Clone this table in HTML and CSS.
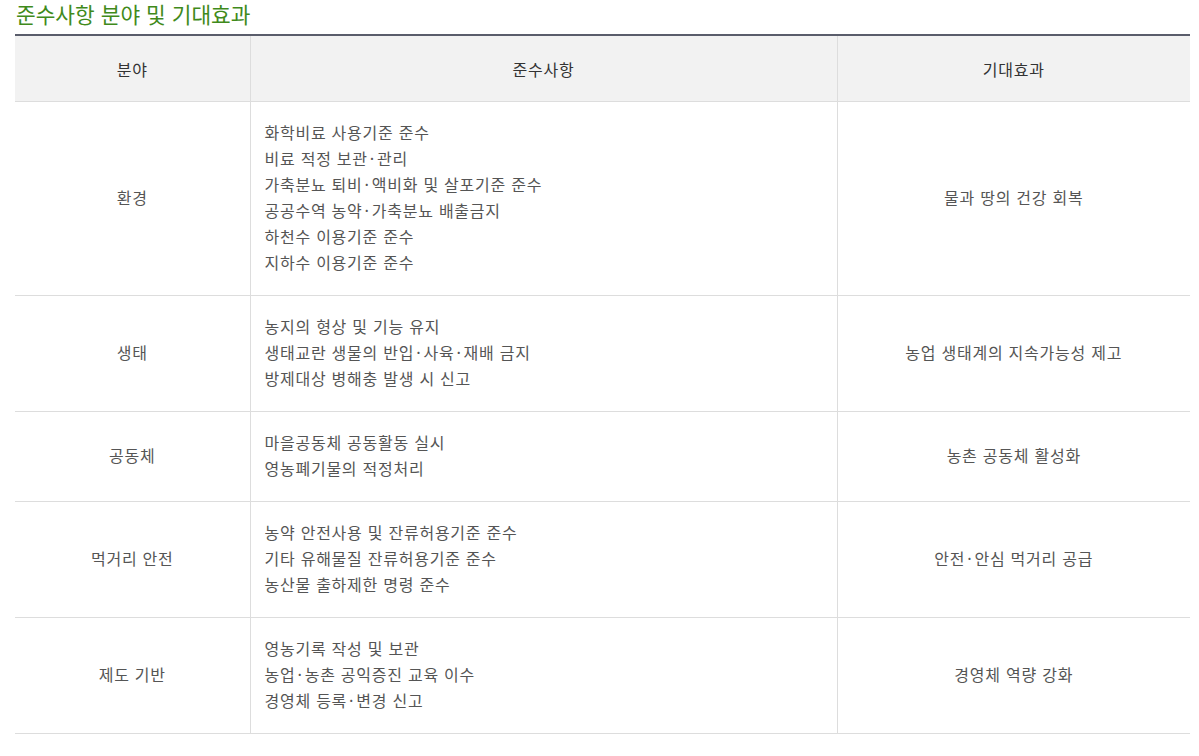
FILE: index.html
```html
<!DOCTYPE html>
<html lang="ko">
<head>
<meta charset="utf-8">
<link rel="stylesheet" href="styles.css">
</head>
<body>
<h2 class="title">준수사항 분야 및 기대효과</h2>
<table class="tbl">
  <colgroup>
    <col class="c1"><col class="c2"><col class="c3">
  </colgroup>
  <thead>
    <tr><th>분야</th><th>준수사항</th><th>기대효과</th></tr>
  </thead>
  <tbody>
    <tr>
      <td class="cat">환경</td>
      <td class="list">화학비료 사용기준 준수<br>비료 적정 보관<span class="dot">·</span>관리<br>가축분뇨 퇴비<span class="dot">·</span>액비화 및 살포기준 준수<br>공공수역 농약<span class="dot">·</span>가축분뇨 배출금지<br>하천수 이용기준 준수<br>지하수 이용기준 준수</td>
      <td class="eff">물과 땅의 건강 회복</td>
    </tr>
    <tr>
      <td class="cat">생태</td>
      <td class="list">농지의 형상 및 기능 유지<br>생태교란 생물의 반입<span class="dot">·</span>사육<span class="dot">·</span>재배 금지<br>방제대상 병해충 발생 시 신고</td>
      <td class="eff">농업 생태계의 지속가능성 제고</td>
    </tr>
    <tr>
      <td class="cat">공동체</td>
      <td class="list">마을공동체 공동활동 실시<br>영농폐기물의 적정처리</td>
      <td class="eff">농촌 공동체 활성화</td>
    </tr>
    <tr>
      <td class="cat">먹거리 안전</td>
      <td class="list">농약 안전사용 및 잔류허용기준 준수<br>기타 유해물질 잔류허용기준 준수<br>농산물 출하제한 명령 준수</td>
      <td class="eff">안전<span class="dot">·</span>안심 먹거리 공급</td>
    </tr>
    <tr>
      <td class="cat">제도 기반</td>
      <td class="list">영농기록 작성 및 보관<br>농업<span class="dot">·</span>농촌 공익증진 교육 이수<br>경영체 등록<span class="dot">·</span>변경 신고</td>
      <td class="eff">경영체 역량 강화</td>
    </tr>
  </tbody>
</table>
</body>
</html>
```
FILE: styles.css
```css
html, body {
  margin: 0;
  padding: 0;
  background: #fff;
}
body {
  font-family: "Noto Sans CJK KR", "Noto Sans", sans-serif;
  color: #555;
  padding: 0 9px 0 15px;
}
.title {
  margin: 0;
  height: 34px;
  padding-left: 1px;
  font-size: 21.4px;
  font-weight: 400;
  line-height: 28px;
  color: #3f8a1b;
}
.tbl {
  width: 1175px;
  border-collapse: collapse;
  border-top: 2px solid #5a5d6b;
  table-layout: fixed;
  font-size: 16px;
  letter-spacing: 0.75px;
}
.c1 { width: 235px; }
.c2 { width: 587px; }
.c3 { width: 353px; }
.tbl th {
  height: 65px;
  background: #f2f2f2;
  font-weight: 400;
  color: #333;
  border-bottom: 1px solid #ddd;
  border-left: 1px solid #ddd;
  padding: 0;
}
.tbl td {
  border-bottom: 1px solid #ddd;
  border-left: 1px solid #ddd;
  line-height: 26px;
  padding: 17px 14px 20px;
  color: #555;
  vertical-align: middle;
}
.tbl th:first-child, .tbl td:first-child { border-left: none; }
.tbl td.cat, .tbl td.eff { text-align: center; }
.tbl td.list { text-align: left; }
.dot { padding: 0 2px; }
```
